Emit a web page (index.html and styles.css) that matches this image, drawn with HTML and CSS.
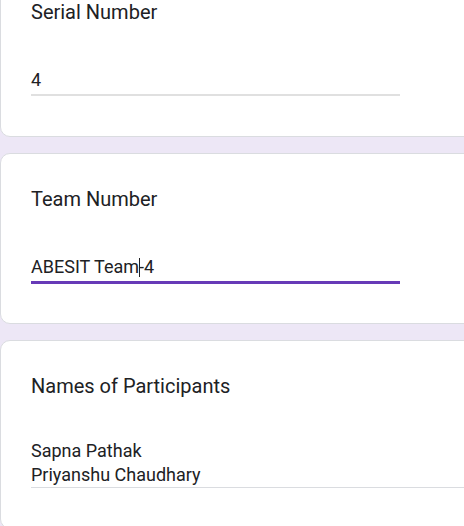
FILE: index.html
```html
<!DOCTYPE html>
<html lang="en">
<head>
<meta charset="utf-8">
<title>Form</title>
<link rel="stylesheet" href="styles.css">
</head>
<body>
<div class="page">
  <section class="card">
    <div class="q-title">Serial Number</div>
    <div class="field">4</div>
  </section>
  <section class="card">
    <div class="q-title">Team Number</div>
    <div class="field field--focused">ABESIT Team<span class="caret"></span>-4</div>
  </section>
  <section class="card">
    <div class="q-title">Names of Participants</div>
    <div class="area">Sapna Pathak<br>Priyanshu Chaudhary</div>
  </section>
</div>
</body>
</html>
```
FILE: styles.css
```css
html, body {
  margin: 0;
  padding: 0;
}
body {
  background: #ede7f6;
  overflow: hidden;
  font-family: Roboto, "Liberation Sans", Arial, sans-serif;
  color: #202124;
}
.page {
  display: flex;
  flex-direction: column;
  gap: 16px;
  margin-top: -34px;
  width: 500px;
}
.card {
  background: #fff;
  border: 1px solid #dadce0;
  border-radius: 10px;
  padding: 33px 0 40px 30px;
}
.q-title {
  font-size: 20px;
  line-height: 24px;
}
.field {
  margin-top: 44px;
  width: 369px;
  font-size: 18px;
  line-height: 24px;
  padding-bottom: 2px;
  border-bottom: 2px solid #e0e0e0;
}
.field--focused {
  border-bottom: 3px solid #673ab7;
  margin-bottom: -1px;
}
.caret {
  display: inline-block;
  width: 1px;
  height: 19px;
  margin-right: -1px;
  background: #202124;
  vertical-align: -4px;
}
.area {
  margin-top: 41px;
  font-size: 18px;
  line-height: 24px;
  border-bottom: 1px solid #dadce0;
}
```
